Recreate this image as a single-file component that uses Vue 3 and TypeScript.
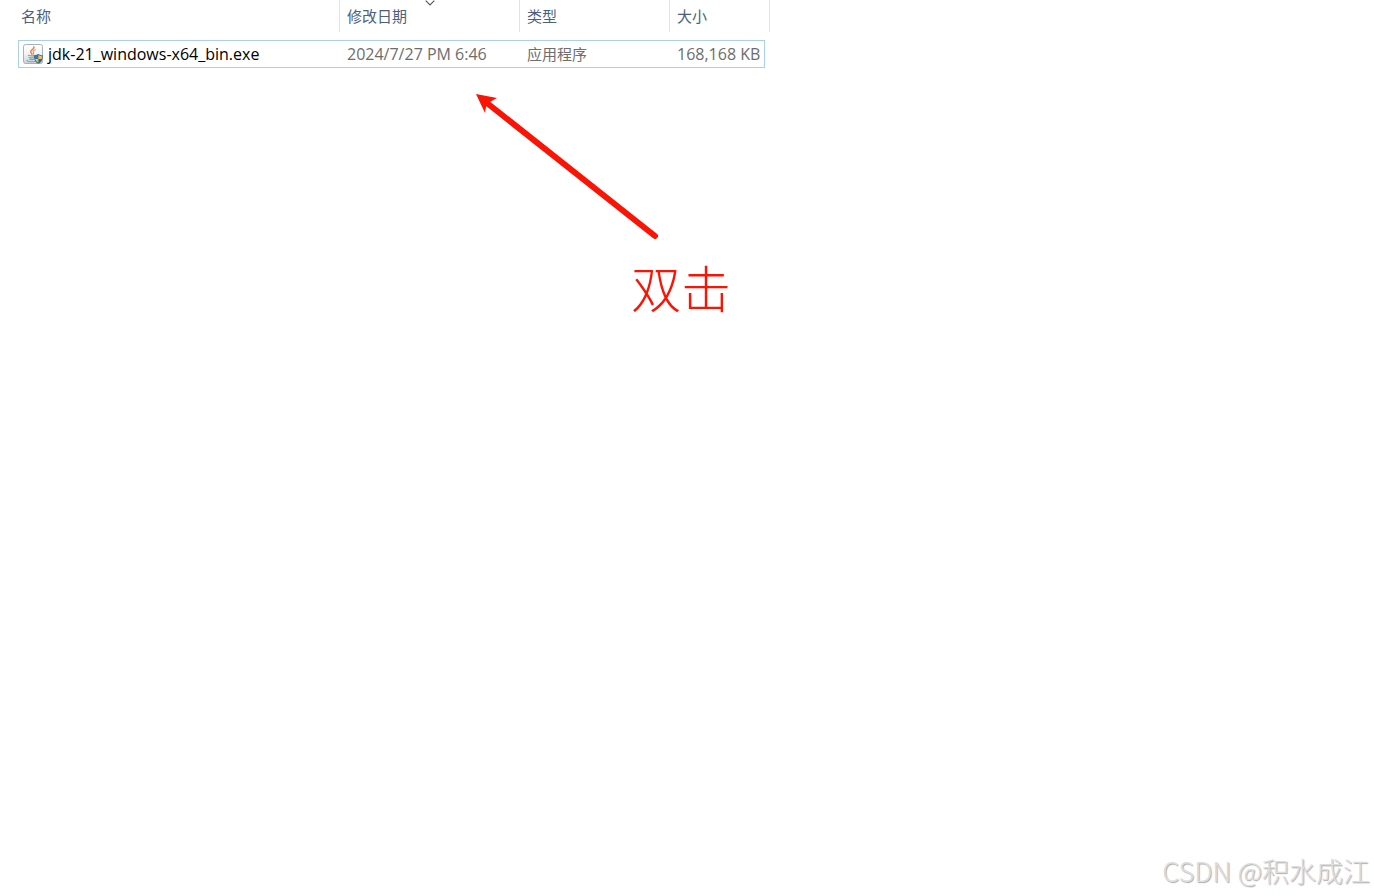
<script setup lang="ts">
interface FileEntry {
  name: string
  modified: string
  type: string
  size: string
}

const columns: { label: string; sorted?: boolean }[] = [
  { label: '名称' },
  { label: '修改日期', sorted: true },
  { label: '类型' },
  { label: '大小' },
]

const files: FileEntry[] = [
  {
    name: 'jdk-21_windows-x64_bin.exe',
    modified: '2024/7/27 PM 6:46',
    type: '应用程序',
    size: '168,168 KB',
  },
]
</script>

<template>
  <main class="explorer">
    <table class="files">
      <thead>
        <tr class="head-row">
          <th
            v-for="column in columns"
            :key="column.label"
            scope="col"
            :aria-sort="column.sorted ? 'descending' : undefined"
          >
            <button type="button" class="sort">{{ column.label }}</button>
            <svg v-if="column.sorted" class="chevron" viewBox="0 0 10 6" aria-hidden="true">
              <path d="M0.7 0.7 L5 5 L9.3 0.7" fill="none" stroke="#555" stroke-width="1.1" />
            </svg>
          </th>
        </tr>
      </thead>
      <tbody>
        <tr v-for="file in files" :key="file.name" class="file-row">
          <td class="name">
            <svg class="icon" viewBox="0 0 20 20" aria-hidden="true">
              <defs>
                <linearGradient id="tile" x1="0" y1="0" x2="0" y2="1">
                  <stop offset="0" stop-color="#ffffff" />
                  <stop offset="0.5" stop-color="#f1f3f4" />
                  <stop offset="1" stop-color="#c9d0d5" />
                </linearGradient>
              </defs>
              <rect x="0.5" y="0.5" width="19" height="19" rx="2" fill="url(#tile)" stroke="#a5b1ba" />
              <g fill="none" stroke-linecap="round">
                <path d="M10.8 2.8 C12 5 7.2 6 7.7 7.8 C7.9 8.8 9 9.2 8.9 10.3" stroke="#ee8140" stroke-width="1.5" />
                <path d="M12.4 5.8 C9.8 6.6 9.7 7.7 10.6 8.6 C11.2 9.3 10.4 10 10.1 10.4" stroke="#ed9358" stroke-width="1.1" />
                <path d="M5.4 11.3 Q8.5 12.5 12.2 11.4" stroke="#7f9db6" stroke-width="1.2" />
                <path d="M6.1 13.4 Q8.8 14.3 11.7 13.5 M6.7 15.3 Q9 16 11.2 15.3" stroke="#7f9db6" stroke-width="1.1" />
                <path d="M4.2 16.3 Q3.7 17.5 8.5 17.7 L12 17.5" stroke="#8ba4b8" stroke-width="1.1" />
              </g>
              <path d="M15.3 10 Q17.2 11.4 19.8 11.4 Q20 17.6 15.3 19.8 Q10.8 17.6 11 11.4 Q13.5 11.4 15.3 10Z" fill="#2c6798" />
              <path d="M11.8 12.2 Q13.8 12 15.4 11 V15 H12.1 Q11.8 13.8 11.8 12.2Z" fill="#3a78aa" />
              <path d="M15.4 11 Q17 12.1 19 12.2 Q19 13.8 18.6 15 H15.4Z M12.1 15 H15.4 V18.8 Q12.7 17.5 12.1 15Z" fill="#f3c74e" />
            </svg>
            <span>{{ file.name }}</span>
          </td>
          <td>{{ file.modified }}</td>
          <td class="type">{{ file.type }}</td>
          <td class="size">{{ file.size }}</td>
        </tr>
      </tbody>
    </table>

    <figure class="note">
      <svg class="arrow" viewBox="0 0 184 148" aria-hidden="true">
        <path d="M11 9 L179 142" stroke="#fa1405" stroke-width="6" stroke-linecap="round" />
        <path d="M0 0 L21 4 L14 8 L10 13 L9 19Z" fill="#fa1405" />
      </svg>
      <figcaption>双击</figcaption>
    </figure>

    <p class="watermark">CSDN @积水成江</p>
  </main>
</template>

<style>
body {
  margin: 0;
  background: #fff;
}
</style>

<style scoped>
.explorer {
  position: relative;
  min-height: 100vh;
  overflow: hidden;
  font-family: "Open Sans", "Noto Sans CJK SC", sans-serif;
  font-size: 16px;
  line-height: 24px;
}

.files,
.files thead,
.files tbody {
  display: block;
}

.files {
  margin-left: 18px;
}

.head-row,
.file-row {
  display: grid;
  grid-template-columns: 322px 180px 150px 1fr;
  box-sizing: border-box;
}

.head-row {
  width: 752px;
  height: 32px;
  margin-bottom: 8px;
  font-size: 15px;
}

th {
  position: relative;
  padding: 4px 0 0 7px;
  border-right: 1px solid #e3e3e3;
  font-weight: 400;
  text-align: left;
}

th:first-child {
  padding-left: 3px;
}

.sort {
  display: block;
  width: 100%;
  padding: 0;
  border: 0;
  background: none;
  color: #4c607a;
  font: inherit;
  text-align: left;
}

.chevron {
  position: absolute;
  top: 0;
  left: 50%;
  width: 10px;
  height: 6px;
  transform: translateX(-50%);
}

.file-row {
  width: 747px;
  height: 28px;
  outline: 1px solid #a9cfea;
  outline-offset: -1px;
  align-items: center;
  color: #6d6d6d;
}

td {
  padding: 0 0 0 7px;
  white-space: nowrap;
}

.name {
  display: flex;
  align-items: center;
  gap: 5px;
  padding-left: 5px;
  color: #000;
}

.icon {
  width: 20px;
  height: 20px;
}

.type {
  font-size: 15px;
}

.size {
  padding-right: 5px;
  text-align: right;
}

.note {
  position: absolute;
  top: 94px;
  left: 476px;
  margin: 0;
  color: #fa1405;
}

.arrow {
  display: block;
  width: 184px;
  height: 148px;
}

.note figcaption {
  margin: 16px 0 0 155px;
  font-family: "KaiTi", "STKaiti", "Noto Sans CJK SC", sans-serif;
  font-size: 50px;
  font-weight: 300;
  line-height: 56px;
  white-space: nowrap;
}

.watermark {
  position: absolute;
  right: 4px;
  bottom: 7px;
  margin: 0;
  color: #dedede;
  font-family: "Noto Sans CJK SC", sans-serif;
  font-size: 27px;
  font-weight: 300;
  line-height: 36px;
  text-shadow: 1px 1px 1px #aaa;
}
</style>
